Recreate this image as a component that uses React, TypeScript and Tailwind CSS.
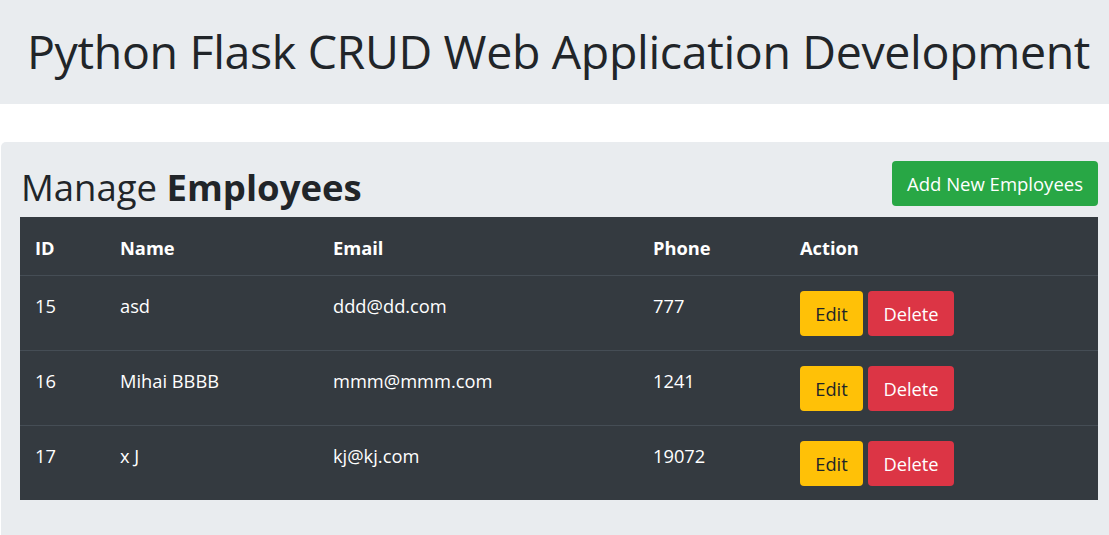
import React from "react";

interface Employee {
  id: number;
  name: string;
  email: string;
  phone: string;
}

const employees: Employee[] = [
  { id: 15, name: "asd", email: "ddd@dd.com", phone: "777" },
  { id: 16, name: "Mihai BBBB", email: "mmm@mmm.com", phone: "1241" },
  { id: 17, name: "x J", email: "kj@kj.com", phone: "19072" },
];

const App = () => {
  return (
    <div
      className="h-[535px] w-[1109px] overflow-hidden bg-white text-[#212529]"
      style={{ fontFamily: '"Open Sans", "Noto Sans", sans-serif' }}
    >
      <div className="flex h-[104px] items-center bg-[#e9ecef] pl-[27px]">
        <h1 className="pb-[2px] text-[46.5px] font-normal leading-none tracking-[-0.35px]">
          Python Flask CRUD Web Application Development
        </h1>
      </div>

      <div className="ml-[1px] mt-[38px] w-[1116px] rounded-[5px] bg-[#e9ecef] px-[19px] pt-[19px] pb-[40px]">
        <div className="mb-[11px] flex h-[45px] items-center justify-between">
          <h2 className="pl-[1px] pt-[7px] text-[36.5px] font-normal leading-none">
            Manage <b className="font-bold">Employees</b>
          </h2>
          <button className="h-[45px] rounded-[4px] bg-[#28a745] px-[15px] text-[18.5px] text-white">
            Add New Employees
          </button>
        </div>

        <table className="w-[1078px] border-collapse bg-[#343a40] text-left text-[18.3px] text-white">
          <thead>
            <tr className="h-[58px]">
              <th className="w-[85px] px-[15px] pt-[3px] font-bold">ID</th>
              <th className="w-[213px] px-[15px] pt-[3px] font-bold">Name</th>
              <th className="w-[320px] px-[15px] pt-[3px] font-bold">Email</th>
              <th className="w-[147px] px-[15px] pt-[3px] font-bold">Phone</th>
              <th className="px-[15px] pt-[3px] font-bold">Action</th>
            </tr>
          </thead>
          <tbody>
            {employees.map((e) => (
              <tr key={e.id} className="h-[75px] border-t border-[#454d55]">
                <td className="px-[15px] pt-[16px] align-top">{e.id}</td>
                <td className="px-[15px] pt-[16px] align-top">{e.name}</td>
                <td className="px-[15px] pt-[16px] align-top">{e.email}</td>
                <td className="px-[15px] pt-[16px] align-top">{e.phone}</td>
                <td className="px-[15px] pt-[2px] align-middle">
                  <div className="flex gap-[5px]">
                    <button className="h-[45px] w-[63px] rounded-[4px] bg-[#ffc107] text-[#212529]">
                      Edit
                    </button>
                    <button className="h-[45px] w-[86px] rounded-[4px] bg-[#dc3545] text-white">
                      Delete
                    </button>
                  </div>
                </td>
              </tr>
            ))}
          </tbody>
        </table>
      </div>
    </div>
  );
};

export default App;
